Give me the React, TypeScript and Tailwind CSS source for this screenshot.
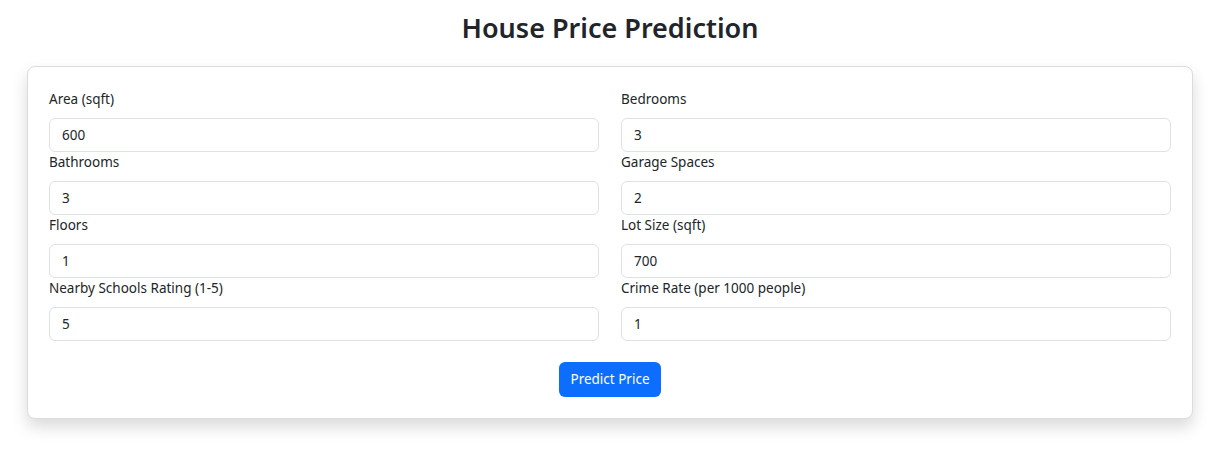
const fields = [
  { label: 'Area (sqft)', value: '600' },
  { label: 'Bedrooms', value: '3' },
  { label: 'Bathrooms', value: '3' },
  { label: 'Garage Spaces', value: '2' },
  { label: 'Floors', value: '1' },
  { label: 'Lot Size (sqft)', value: '700' },
  { label: 'Nearby Schools Rating (1-5)', value: '5' },
  { label: 'Crime Rate (per 1000 people)', value: '1' },
];

const App = () => {
  return (
    <div className="min-h-[452px] bg-white font-['Noto_Sans',sans-serif] text-[#212529]">
      <h2 className="pl-[6px] pt-[9px] text-center text-[27px] font-semibold leading-[38px]">
        House Price Prediction
      </h2>

      <div className="ml-[27px] mt-[19px] w-[1166px] rounded-lg border border-[#dcdcdc] bg-white px-[21px] pb-[21px] pt-[22px] shadow-[0_8px_16px_rgba(0,0,0,0.15)]">
        <form className="grid grid-cols-2 gap-x-[22px]" onSubmit={e => e.preventDefault()}>
          {fields.map(field => (
            <div key={field.label}>
              <label className="mb-2 block text-[13.5px] leading-[21px]">{field.label}</label>
              <input
                type="number"
                defaultValue={field.value}
                className="block h-[34px] w-full rounded-md border border-[#dee2e6] px-3 text-[13.5px] text-[#212529] outline-none"
              />
            </div>
          ))}
        </form>

        <div className="mt-[21px] flex justify-center">
          <button
            type="button"
            className="h-[35px] rounded-md bg-[#0d6efd] px-[11px] text-[13.5px] text-white hover:bg-[#0b5ed7]"
          >
            Predict Price
          </button>
        </div>
      </div>
    </div>
  );
};

export default App;
